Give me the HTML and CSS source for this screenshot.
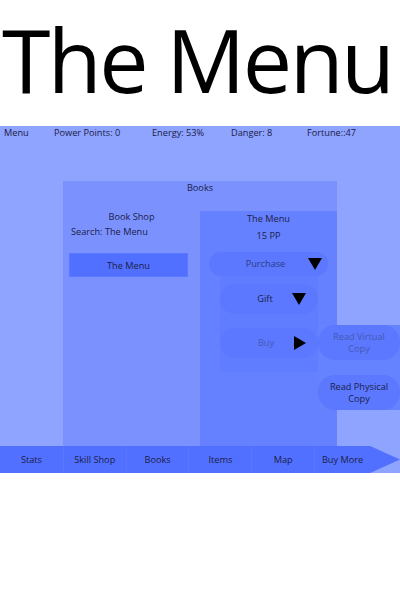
FILE: index.html
```html
<!DOCTYPE html>
<html lang="en">
<head>
  <meta charset="UTF-8">
  <meta name="viewport" content="width=device-width, initial-scale=1.0">
  <title>The Menu</title>
  <link rel="stylesheet" href="styles.css">
</head>
<body>

  <!-- Page Title -->
  <h1 class="title">The Menu</h1>

  <!-- Game Screen -->
  <div class="screen">
    <div class="stats-bar">
      <span class="stat stat-menu">Menu</span>
      <span class="stat stat-pp">Power Points: 0</span>
      <span class="stat stat-energy">Energy: 53%</span>
      <span class="stat stat-danger">Danger: 8</span>
      <span class="stat stat-fortune">Fortune::47</span>
    </div>

    <div class="books-panel">
      <div class="panel-title">Books</div>
      <div class="panel-body">

        <!-- Shop column -->
        <div class="shop">
          <div class="shop-title">Book Shop</div>
          <div class="shop-search">Search: The Menu</div>
          <button class="result-btn">The Menu</button>
        </div>

        <!-- Book detail -->
        <div class="detail">
          <div class="detail-name">The Menu</div>
          <div class="detail-price">15 PP</div>
          <div class="pill pill-purchase">
            <span class="pill-label faded">Purchase</span>
            <span class="tri tri-down"></span>
          </div>
          <div class="submenu">
            <div class="pill pill-sub">
              <span class="pill-label">Gift</span>
              <span class="tri tri-down"></span>
            </div>
            <div class="pill pill-sub pill-buy">
              <span class="pill-label muted">Buy</span>
              <span class="tri tri-right"></span>
              <div class="read-menu">
                <div class="read-pill muted">Read Virtual Copy</div>
                <div class="read-pill">Read Physical Copy</div>
              </div>
            </div>
          </div>
        </div>

      </div>
    </div>

    <!-- Bottom Navigation -->
    <nav class="nav">
      <div class="nav-item">Stats</div>
      <div class="nav-item">Skill Shop</div>
      <div class="nav-item">Books</div>
      <div class="nav-item">Items</div>
      <div class="nav-item">Map</div>
      <div class="nav-item nav-more">Buy More</div>
    </nav>
  </div>

</body>
</html>
```

FILE: styles.css
```css
/* Basic Reset */
* {
  margin: 0;
  padding: 0;
  box-sizing: border-box;
}

body {
  width: 400px;
  background-color: #fff;
  font-family: 'Open Sans', sans-serif;
  color: #1a2048;
}

/* Title */
.title {
  height: 126px;
  padding-left: 2px;
  font-size: 88px;
  font-weight: 400;
  line-height: 118px;
  letter-spacing: -2.6px;
  color: #000;
  white-space: nowrap;
}

/* Game Screen */
.screen {
  display: flex;
  flex-direction: column;
  height: 347px;
  background-color: #8fa4fe;
}

.stats-bar {
  display: flex;
  height: 55px;
  padding-top: 1px;
  font-size: 9.2px;
  line-height: 12px;
}

.stat-menu { width: 54px; padding-left: 4px; }
.stat-pp { width: 98px; }
.stat-energy { width: 79px; }
.stat-danger { width: 76px; }

/* Books Panel */
.books-panel {
  display: flex;
  flex-direction: column;
  flex: 1;
  width: 274px;
  margin-left: 63px;
  background-color: #7b92fe;
}

.panel-title {
  height: 30px;
  padding-top: 1px;
  font-size: 9.2px;
  line-height: 12px;
  text-align: center;
}

.panel-body {
  display: grid;
  grid-template-columns: 137px 137px;
  flex: 1;
}

/* Shop column */
.shop {
  display: flex;
  flex-direction: column;
  font-size: 9.2px;
  line-height: 12px;
}

.shop-title {
  text-align: center;
}

.shop-search {
  margin-top: 3px;
  padding-left: 8px;
}

.result-btn {
  width: 119px;
  height: 24px;
  margin: 15px 0 0 6px;
  border: 1px solid #5a78ff;
  background-color: #5270ff;
  color: #1a2048;
  font-family: inherit;
  font-size: 9.2px;
}

/* Book detail */
.detail {
  display: flex;
  flex-direction: column;
  background-color: #6681ff;
  font-size: 9.2px;
  line-height: 12px;
}

.detail-name {
  margin-top: 2px;
  text-align: center;
}

.detail-price {
  margin-top: 5px;
  text-align: center;
}

.pill {
  position: relative;
  display: flex;
  align-items: center;
  background-color: #5b78ff;
  border-radius: 15px;
}

.pill-label {
  flex: 1;
  text-align: center;
}

.pill-purchase {
  width: 119px;
  height: 24px;
  margin: 10px 0 0 9px;
  padding: 0 6px 0 14px;
}

.submenu {
  width: 98px;
  height: 96px;
  margin-left: 20px;
  padding-top: 8px;
  background-color: #607dff;
}

.pill-sub {
  height: 30px;
  padding: 0 12px 0 18px;
}

.pill-buy {
  margin-top: 14px;
}

.faded { color: #2e3c86; }
.muted { color: #4659b5; }

/* Triangles */
.tri {
  width: 0;
  height: 0;
}

.tri-down {
  border-left: 7px solid transparent;
  border-right: 7px solid transparent;
  border-top: 12px solid #000;
}

.tri-right {
  border-top: 7px solid transparent;
  border-bottom: 7px solid transparent;
  border-left: 12px solid #000;
}

/* Read popout */
.read-menu {
  position: absolute;
  left: 100%;
  top: -3px;
  display: flex;
  flex-direction: column;
  gap: 15px;
  width: 82px;
  height: 85px;
  background-color: #6582ff;
}

.read-pill {
  display: flex;
  align-items: center;
  justify-content: center;
  height: 35px;
  padding: 0 4px;
  background-color: #5b78ff;
  border-radius: 17px;
  font-size: 9.2px;
  line-height: 12px;
  text-align: center;
}

/* Bottom Navigation */
.nav {
  display: flex;
  height: 27px;
  font-size: 9.2px;
}

.nav-item {
  display: flex;
  align-items: center;
  justify-content: center;
  width: 63px;
  background-color: #5270ff;
  border-left: 1px solid #5a76ff;
}

.nav-item:first-child {
  border-left: none;
}

.nav-more {
  width: 86px;
  padding-right: 30px;
  clip-path: polygon(0 0, 56px 0, 100% 50%, 56px 100%, 0 100%);
}
```
